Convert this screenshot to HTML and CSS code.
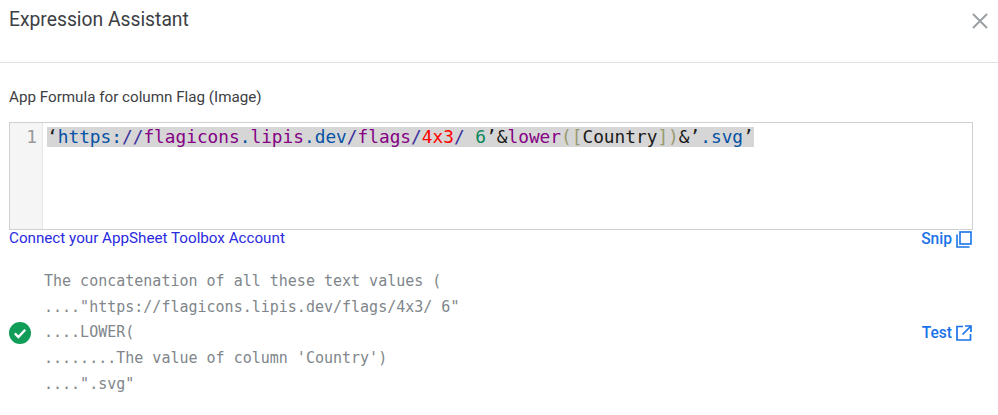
FILE: index.html
```html
<!DOCTYPE html>
<html lang="en">
<head>
<meta charset="utf-8">
<title>Expression Assistant</title>
<link rel="stylesheet" href="styles.css">
</head>
<body>
<div class="dialog">
  <header class="header">
    <h1 class="title">Expression Assistant</h1>
    <svg class="close" width="16" height="16" viewBox="0 0 16 16" aria-label="Close"><path d="M1 1L15 15M15 1L1 15" stroke="#9aa0a6" stroke-width="2" fill="none"/></svg>
  </header>
  <main class="content">
    <div class="label">App Formula for column Flag (Image)</div>
    <div class="editor">
      <div class="gutter">1</div>
      <div class="code"><span class="line"><span class="k">‘</span><span class="b">https:</span><span class="i">//</span><span class="p">flagicons</span><span class="b">.</span><span class="p">lipis</span><span class="b">.dev</span><span class="i">/</span><span class="p">flags</span><span class="i">/</span><span class="r">4x3</span><span class="i">/</span> <span class="g">6</span><span class="k">’&amp;</span><span class="p">lower</span><span class="o">(</span><span class="o">[</span><span class="k">Country</span><span class="o">])</span><span class="k">&amp;’</span><span class="b">.svg</span><span class="k">’</span></span></div>
    </div>
    <div class="links">
      <a class="connect">Connect your AppSheet Toolbox Account</a>
      <a class="action">Snip
        <svg width="16" height="17" viewBox="0 0 16 17"><path d="M1 3.5V16H13.5" fill="none" stroke="#1a73e8" stroke-width="1.6"/><rect x="4" y="1" width="11" height="12" fill="none" stroke="#1a73e8" stroke-width="1.6"/></svg>
      </a>
    </div>
    <div class="result">
      <svg class="check" width="22" height="22" viewBox="0 0 22 22"><circle cx="11" cy="11" r="11" fill="#0f9d58"/><path d="M5.8 11.4L9.4 15L16.2 7.8" fill="none" stroke="#fff" stroke-width="2.4"/></svg>
      <pre class="desc">The concatenation of all these text values (
...."https://flagicons.lipis.dev/flags/4x3/ 6"
....LOWER(
........The value of column 'Country')
....".svg"</pre>
      <a class="action">Test
        <svg width="16" height="16" viewBox="0 0 16 16"><path d="M7 1.5H1V15H14.5V9M9 1H15V7M15 1L6.5 9.5" fill="none" stroke="#1a73e8" stroke-width="1.7"/></svg>
      </a>
    </div>
  </main>
</div>
</body>
</html>
```
FILE: styles.css
```css
html, body {
  margin: 0;
  padding: 0;
  background: #fff;
}
body {
  font-family: Roboto, "Liberation Sans", sans-serif;
  overflow: hidden;
}
.dialog {
  width: 998px;
  height: 415px;
}
.header {
  height: 62px;
  border-bottom: 1px solid #dfe1e5;
  display: flex;
  justify-content: space-between;
  align-items: flex-start;
  padding: 0 10px 0 9px;
}
.title {
  margin: 8px 0 0;
  font-size: 19.3px;
  line-height: 24px;
  font-weight: 400;
  color: #3c4043;
}
.close {
  margin-top: 13px;
}
.content {
  padding: 25px 25px 0 9px;
}
.label {
  font-size: 15.2px;
  line-height: 18px;
  color: #3c4043;
}
.editor {
  margin-top: 16px;
  height: 106px;
  border: 1px solid #d0d0d0;
  display: flex;
}
.gutter {
  width: 27px;
  padding: 0 5px 0 0;
  flex: none;
  background: #f5f5f5;
  border-right: 1px solid #e6e6e6;
  text-align: right;
  font-family: "DejaVu Sans Mono", monospace;
  font-size: 18px;
  line-height: 28px;
  color: #999;
}
.code {
  padding: 4px 0 0 4px;
  font-family: "DejaVu Sans Mono", monospace;
  font-size: 17.8px;
  line-height: 20px;
  white-space: pre;
}
.line {
  display: inline-block;
  background: #d6d6d6;
}
.k { color: #1a1a1a; }
.b { color: #0451a5; }
.i { color: #3a2f9e; }
.p { color: #850085; }
.r { color: #f00; }
.g { color: #09885a; }
.o { color: #9a9a70; }
.links {
  display: flex;
  justify-content: space-between;
  align-items: flex-start;
}
.connect {
  font-size: 15.2px;
  line-height: 16px;
  color: #2a2ae0;
}
.action {
  display: flex;
  align-items: center;
  gap: 4px;
  margin-right: 1px;
  font-size: 15.6px;
  font-weight: 500;
  color: #1a73e8;
}
.result {
  margin-top: 21px;
  display: flex;
  align-items: center;
}
.check {
  flex: none;
  margin-right: 13px;
  margin-top: -1px;
}
.desc {
  flex: 1;
  margin: 0;
  font-family: "DejaVu Sans Mono", monospace;
  font-size: 15px;
  line-height: 25.7px;
  color: #80868b;
}
```
